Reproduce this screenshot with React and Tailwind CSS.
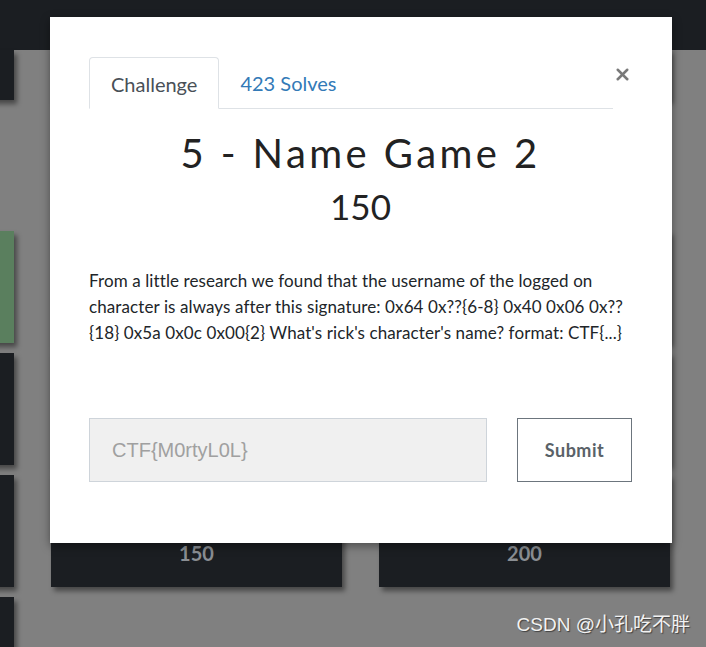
import { X } from "lucide-react";

const lato = { fontFamily: "Lato, 'Noto Sans', sans-serif" };

function Card({ value, green, short }) {
  return (
    <div
      className={`flex flex-col justify-end items-center pb-[24px] shadow-[3px_4px_5px_rgba(0,0,0,0.45)] ${
        short ? "h-[50px]" : "h-[112px]"
      } ${green ? "bg-[#5a7f5e]" : "bg-[#1b1e22]"}`}
    >
      {value && <span className="text-[20px] font-bold text-[#8a8e93] leading-none">{value}</span>}
    </div>
  );
}

function Column({ value, last }) {
  return (
    <div className="flex flex-col gap-[10px] w-[291px] shrink-0">
      <Card short />
      <div className="mt-[121px]">
        <Card green />
      </div>
      <Card />
      <Card value={value} />
      {last && <Card />}
    </div>
  );
}

export default function App() {
  return (
    <div className="relative w-[706px] h-[647px] overflow-hidden bg-[#808080]" style={lato}>
      <div className="h-[50px] bg-[#1b1e22]" />
      <div className="flex gap-[37px] ml-[-277px]">
        <Column last />
        <Column value="150" />
        <Column value="200" />
      </div>

      {/* modal */}
      <div className="absolute left-[50px] top-[17px] w-[622px] h-[526px] bg-white shadow-[0_3px_9px_rgba(0,0,0,0.4)] pt-[40px] pl-[39px] pr-[40px]">
        <div className="flex items-start">
          <div className="flex-1 flex border-b border-[#dee2e6] h-[52px]">
            <div className="h-[52px] -mb-px px-[21px] flex items-center pt-[1px] border border-[#dee2e6] border-b-white rounded-t-[4px] bg-white text-[20px] text-[#495057]">
              Challenge
            </div>
            <div className="h-[51px] px-[21px] flex items-center pt-[1px] text-[20px] text-[#337ab7]">423 Solves</div>
          </div>
          <button className="mt-[8px] w-[19px] flex justify-end text-[#7a7a7a]">
            <X size={19} strokeWidth={3.2} />
          </button>
        </div>

        <h2 className="mt-[20px] text-center text-[40px] font-normal tracking-[3.4px] leading-[48px] text-[#222]">
          5 - Name Game 2
        </h2>
        <div className="mt-[8px] text-center text-[35px] leading-[42px] text-[#222]">150</div>

        <p className="mt-[41px] text-[17px] leading-[26px] text-[#212529] tracking-[0.1px]">
          From a little research we found that the username of the logged on character is always after this
          signature: 0x64 0x??{"{6-8}"} 0x40 0x06 0x??{"{18}"} 0x5a 0x0c 0x00{"{2}"} What's rick's character's
          name? format: CTF{"{...}"}
        </p>

        <div className="mt-[72px] flex items-center">
          <div
            className="w-[398px] h-[64px] bg-[#f0f0f0] border border-[#ced4da] flex items-center pl-[22px] text-[20px] text-[#a0a0a0]"
            style={{ fontFamily: "'Liberation Sans', Arial, sans-serif" }}
          >
            CTF{"{M0rtyL0L}"}
          </div>
          <button className="ml-[30px] w-[115px] h-[64px] border border-[#6c757d] bg-white text-[18px] font-bold text-[#5a6268] tracking-[0.5px]">
            Submit
          </button>
        </div>
      </div>

      <div
        className="absolute right-[16px] bottom-[8px] text-[19px] text-[#f2f2f2] [text-shadow:1px_1px_1px_rgba(0,0,0,0.5)]"
        style={{ fontFamily: "'Liberation Sans', 'Noto Sans CJK SC', sans-serif" }}
      >
        CSDN @小孔吃不胖
      </div>
    </div>
  );
}
